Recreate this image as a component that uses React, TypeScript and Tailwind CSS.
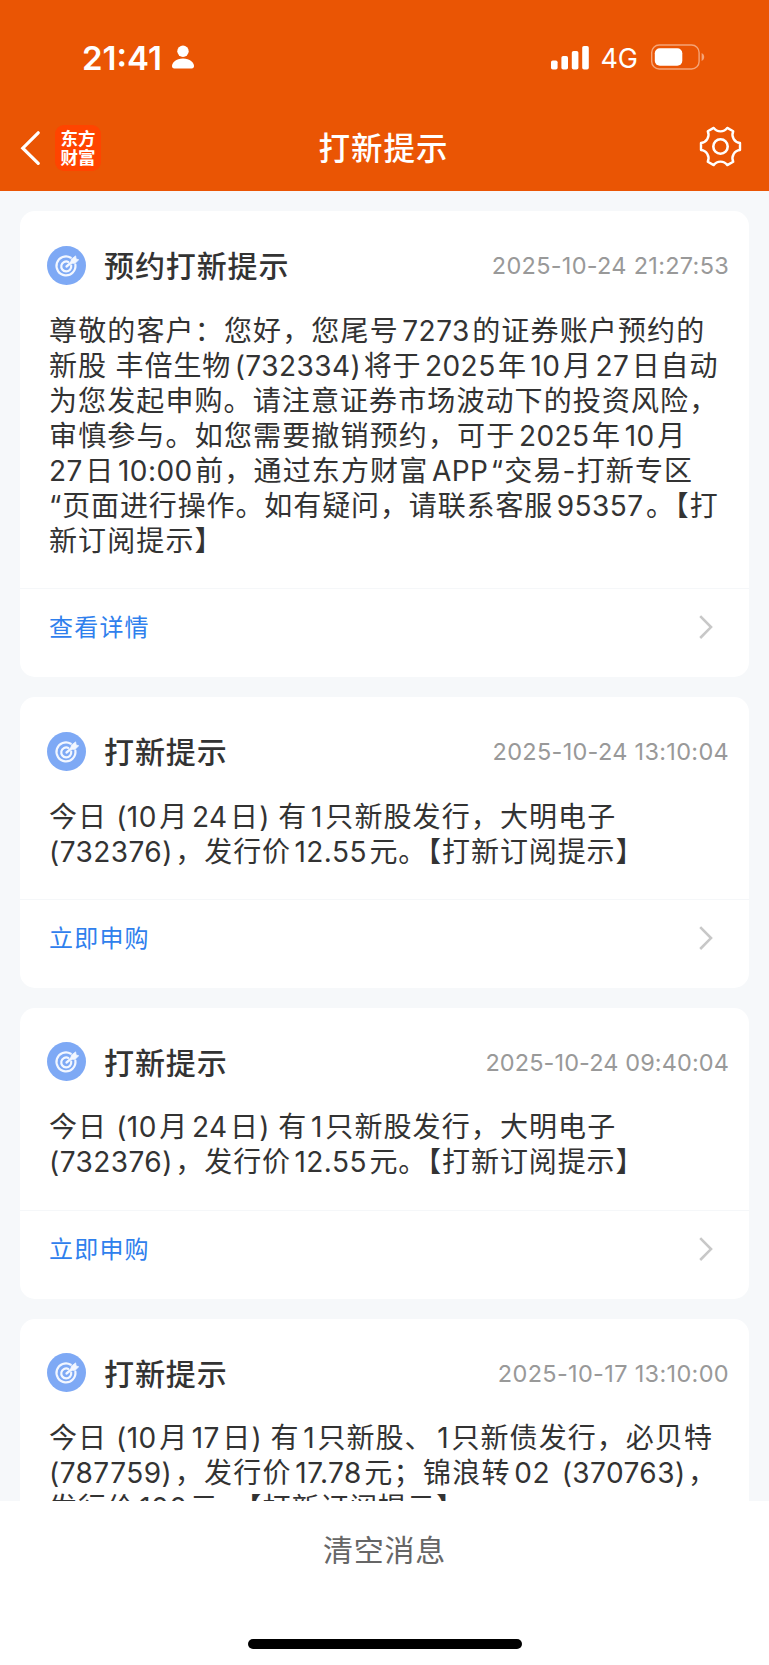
import { Fragment } from 'react'

type Line = {
    text: string
    className: string
}

type Message = {
    id: number
    title: string
    time: string
    timeClass: string
    lines: Line[]
    action: string
}

const messages: Message[] = [
    {
        id: 1,
        title: '预约打新提示',
        time: '2025-10-24 21:27:53',
        timeClass: 'tracking-[0.28px]',
        lines: [
            { text: '尊敬的客户：您好，您尾号7273的证券账户预约的', className: 'tracking-[1.15px]' },
            { text: '新股 丰倍生物(732334)将于2025年10月27日自动', className: 'tracking-[0.9px]' },
            { text: '为您发起申购。请注意证券市场波动下的投资风险，', className: 'tracking-[1.1px]' },
            { text: '审慎参与。如您需要撤销预约，可于2025年10月', className: 'tracking-[1.15px]' },
            { text: '27日10:00前，通过东方财富APP“交易-打新专区', className: 'tracking-[1.15px]' },
            { text: '“页面进行操作。如有疑问，请联系客服95357。【打', className: 'tracking-[0.88px]' },
            { text: '新订阅提示】', className: 'tracking-[1.1px]' },
        ],
        action: '查看详情',
    },
    {
        id: 2,
        title: '打新提示',
        time: '2025-10-24 13:10:04',
        timeClass: 'tracking-[0.3px]',
        lines: [
            { text: '今日 (10月24日) 有1只新股发行，大明电子', className: 'tracking-[1.1px]' },
            { text: '(732376)，发行价12.55元。【打新订阅提示】', className: 'tracking-[0.9px]' },
        ],
        action: '立即申购',
    },
    {
        id: 3,
        title: '打新提示',
        time: '2025-10-24 09:40:04',
        timeClass: 'tracking-[0.1px]',
        lines: [
            { text: '今日 (10月24日) 有1只新股发行，大明电子', className: 'tracking-[1.1px]' },
            { text: '(732376)，发行价12.55元。【打新订阅提示】', className: 'tracking-[0.9px]' },
        ],
        action: '立即申购',
    },
    {
        id: 4,
        title: '打新提示',
        time: '2025-10-17 13:10:00',
        timeClass: 'tracking-[0.33px]',
        lines: [
            { text: '今日 (10月17日) 有1只新股、1只新债发行，必贝特', className: 'tracking-[1.05px]' },
            { text: '(787759)，发行价17.78元；锦浪转02 (370763)，', className: 'tracking-[1.3px]' },
            { text: '发行价100元。【打新订阅提示】', className: 'tracking-[0.9px]' },
        ],
        action: '立即申购',
    },
]

// six-tooth gear outline around 0,0
function gearPath() {
    const point = (radius: number, degrees: number) => {
        const a = (degrees * Math.PI) / 180
        return `${(radius * Math.cos(a)).toFixed(2)} ${(radius * Math.sin(a)).toFixed(2)}`
    }
    let d = `M${point(19.8, -10)}`
    for (let k = 0; k < 6; k++) {
        const a = k * 60
        d += `L${point(19.8, a + 10)}C${point(14.4, a + 16)} ${point(14.4, a + 44)} ${point(19.8, a + 50)}`
    }
    return d + 'Z'
}

function StatusBar() {
    return (
        <div className="flex h-[114px] items-center pl-[82px] pr-16 text-white">
            <span className="pt-[2px] text-[33px] font-semibold leading-none">21:41</span>
            <svg className="ml-[10px] h-6 w-[22px]" viewBox="0 0 22 24" fill="currentColor">
                <circle cx="11" cy="6.2" r="5.7" />
                <path d="M0 21C0 17.5 4 13.4 11 13.4S22 17.5 22 21c0 1.6-.8 2.4-2.3 2.4H2.3C.8 23.4 0 22.6 0 21Z" />
            </svg>
            <svg className="ml-auto h-[25px] w-[38px]" viewBox="0 0 38 25" fill="currentColor">
                <rect x="0" y="15.5" width="6.6" height="9" rx="1.8" />
                <rect x="10.4" y="11" width="6.6" height="13.5" rx="1.8" />
                <rect x="20.8" y="6" width="6.6" height="18.5" rx="1.8" />
                <rect x="31.2" y="1" width="6.6" height="23.5" rx="1.8" />
            </svg>
            <span className="ml-[11px] pt-[2px] text-[27px] leading-none">4G</span>
            <svg className="ml-[13px] h-[26px] w-[54px]" viewBox="0 0 54 26">
                <rect x="0.7" y="1" width="47.4" height="24" rx="7.5" fill="none" stroke="#f5a477" strokeWidth="1.4" />
                <rect x="3.8" y="4.2" width="27.5" height="17.6" rx="5" fill="#fff" />
                <path d="M50.6 9v8c1.6-.7 2.6-2.2 2.6-4s-1-3.300-2.600-4Z" fill="#f5a477" />
            </svg>
        </div>
    )
}

function NavBar() {
    return (
        <div className="flex h-[68px] items-center justify-between pl-5 pr-[27px] text-white">
            <div className="flex w-[239px] items-center">
                <svg className="h-9 w-5" viewBox="0 0 20 36" fill="none" stroke="currentColor" strokeWidth="3.2" strokeLinecap="round">
                    <path d="M18.2 2.8 2.8 18.2l15.4 15.2" />
                </svg>
                <div className="ml-[15px] flex size-[46px] flex-col items-center justify-center rounded-[9px] bg-[#ff4400] text-[17.5px] font-bold leading-[19.5px]">
                    <span>东方</span>
                    <span>财富</span>
                </div>
            </div>
            <h1 className="pt-[2px] text-center text-[31.5px] font-medium leading-none tracking-[1px]">打新提示</h1>
            <div className="flex w-[234px] justify-end">
                <svg className="mb-[3px] size-[43px]" viewBox="-21.5 -21.5 43 43" fill="none" stroke="currentColor" strokeWidth="2.4" strokeLinejoin="round">
                    <path d={gearPath()} />
                    <circle r="7.2" strokeWidth="2.6" />
                </svg>
            </div>
        </div>
    )
}

function TargetIcon() {
    return (
        <svg className="size-[39px] shrink-0" viewBox="0 0 39 39" fill="none" stroke="#f3f7ff" strokeLinecap="round">
            <circle cx="19.5" cy="19.5" r="19.5" fill="#7ea9f5" stroke="none" />
            <path d="M23.8 11.7a9.5 9.5 0 1 0 4.6 7" strokeWidth="2.2" />
            <path d="M21.3 15.9a5 5 0 1 0 2.9 3.8" strokeWidth="2.2" />
            <path d="m19.5 20.5 6-5" strokeWidth="2.3" />
            <path d="m23.8 16.8.6-3.6 4.2-3.3.5 3 2.6.9-3.6 3.5Z" fill="#f3f7ff" strokeWidth="0.8" strokeLinejoin="round" />
        </svg>
    )
}

// puts a little air between Chinese and latin runs
function MixedText({ text }: { text: string }) {
    const parts = text.split(/([0-9A-Za-z.:()]+)/).filter(Boolean)
    return (
        <>
            {parts.map((part, i) => {
                const latin = /^[0-9A-Za-z.:()]+$/.test(part)
                if (!latin) return <Fragment key={i}>{part}</Fragment>
                if (part === ')') return <span key={i} className="tracking-normal">{part}</span>

                // a real space already separates the run from what stands before it
                const tight = i === 0 || parts[i - 1].endsWith(' ')
                return (
                    <span key={i} className={`mr-[2.5px] tracking-[0.45px] ${tight ? 'ml-0' : 'ml-[3.5px]'}`}>{part}</span>
                )
            })}
        </>
    )
}

function MessageCard({ message }: { message: Message }) {
    return (
        <article className="shrink-0 rounded-[15px] bg-white pt-[34.5px]">
            <header className="flex h-[39px] items-center pl-[27px] pr-5">
                <TargetIcon />
                <h2 className="ml-[18px] pt-[2px] text-[30px] font-medium leading-none tracking-[0.9px] text-[#333]">{message.title}</h2>
                <time className={`ml-auto pt-[2px] text-[23.5px] leading-none text-[#999] ${message.timeClass}`}>{message.time}</time>
            </header>
            <div className="mt-[29px] pb-[29px] pl-[29px] text-[28px] leading-[35.1px] text-[#333]">
                {message.lines.map((line) => (
                    <p key={line.text} className={`h-[35.1px] whitespace-nowrap ${line.className}`}>
                        <MixedText text={line.text} />
                    </p>
                ))}
            </div>
            <footer className="flex h-[89px] items-start justify-between border-t-[1.5px] border-[#f5f7f9] pl-[29px] pr-9 pt-[26px]">
                <a className="text-[24px] leading-[26px] tracking-[1.2px] text-[#2f80ed]">{message.action}</a>
                <svg className="h-[26px] w-[14px]" viewBox="0 0 14 26" fill="none" stroke="#c8c8c8" strokeWidth="2.6">
                    <path d="M1.2 1.2 12 12.1 1.2 23" />
                </svg>
            </footer>
        </article>
    )
}

export default function App() {
    return (
        <div className="flex h-[1665px] w-[769px] flex-col overflow-hidden bg-[#f6f8fa] font-['Inter','Noto_Sans_CJK_SC',sans-serif]">
            <div className="h-[191px] shrink-0 bg-[#ea5504]">
                <StatusBar />
                <NavBar />
            </div>
            <main className="flex min-h-0 flex-1 flex-col gap-5 overflow-hidden px-5 pt-5">
                {messages.map((message) => (
                    <MessageCard key={message.id} message={message} />
                ))}
            </main>
            <div className="flex h-[164px] shrink-0 flex-col items-center justify-between bg-white pb-4 pt-[34px]">
                <button className="text-[30px] leading-[30px] tracking-[0.8px] text-[#666]">清空消息</button>
                <div className="h-[10px] w-[274px] rounded-full bg-black" />
            </div>
        </div>
    )
}
